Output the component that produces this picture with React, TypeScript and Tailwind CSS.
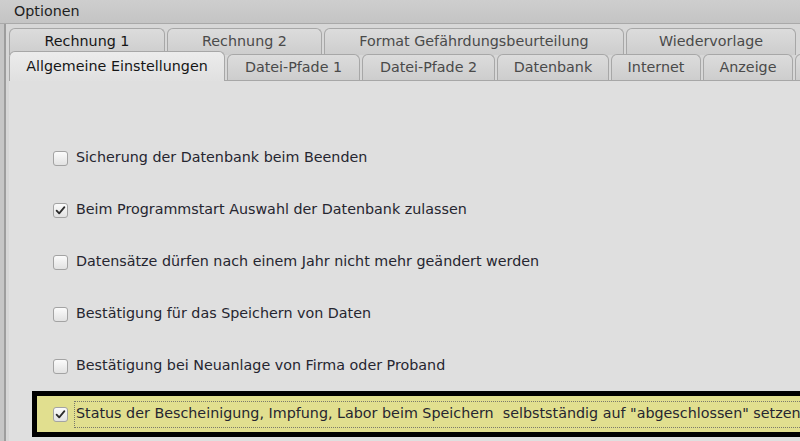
import { ReactNode } from 'react';

const backTabs = [
  { label: 'Rechnung 1', w: 'w-[156px]', dark: true },
  { label: 'Rechnung 2', w: 'w-[155px]' },
  { label: 'Format Gefährdungsbeurteilung', w: 'w-[300px]' },
  { label: 'Wiedervorlage', w: 'w-[170px]' },
];

const frontTabs = [
  { label: 'Datei-Pfade 1', w: 'w-[133px]' },
  { label: 'Datei-Pfade 2', w: 'w-[133px]' },
  { label: 'Datenbank', w: 'w-[112px]' },
  { label: 'Internet', w: 'w-[90px]' },
  { label: 'Anzeige', w: 'w-[90px]' },
  { label: '', w: 'w-[90px]' },
];

const options = [
  { label: 'Sicherung der Datenbank beim Beenden', checked: false },
  { label: 'Beim Programmstart Auswahl der Datenbank zulassen', checked: true },
  { label: 'Datensätze dürfen nach einem Jahr nicht mehr geändert werden', checked: false },
  { label: 'Bestätigung für das Speichern von Daten', checked: false },
  { label: 'Bestätigung bei Neuanlage von Firma oder Proband', checked: false },
];

function Tab({ children, className, dark }: { children: ReactNode; className: string; dark?: boolean }) {
  return (
    <div
      className={`shrink-0 h-full flex items-center justify-center rounded-t-[6px] border border-b-0 border-[#a7a7a7] bg-gradient-to-b from-[#dcdcdc] to-[#cdcdcd] ${
        dark ? 'text-[#161616]' : 'text-[#4a4a4a]'
      } ${className}`}
    >
      {children}
    </div>
  );
}

function CheckBox({ checked }: { checked: boolean }) {
  return (
    <div className="shrink-0 w-[15px] h-[15px] rounded-[3px] border border-[#a3a3a3] bg-gradient-to-b from-[#fbfbfb] to-[#e2e2e2] flex items-center justify-center">
      {checked && (
        <svg width="11" height="11" viewBox="0 0 11 11">
          <path d="M1.6 5.6 L4.2 8.4 L9.4 2.2" fill="none" stroke="#2b2b2b" strokeWidth="1.8" strokeLinecap="round" strokeLinejoin="round" />
        </svg>
      )}
    </div>
  );
}

export default function App() {
  return (
    <div className="w-[800px] h-[441px] overflow-hidden flex flex-col bg-[#c6c6c6] text-[14.3px] text-[#262630] font-['DejaVu_Sans',sans-serif]">
      {/* Window title */}
      <div className="h-[24px] shrink-0 flex items-center px-[14px] bg-gradient-to-b from-[#cecece] to-[#c4c4c4] border-b border-[#a9a9a9] text-[#1e1e1e]">
        Optionen
      </div>

      <div className="flex-1 flex min-h-0 pl-[4px]">
        <div className="flex-1 flex flex-col min-w-0 border-l-2 border-[#9d9d9d] bg-[#d7d7d7] pl-[3px] pt-[4px]">
          {/* Tab rows */}
          <div className="flex gap-[2px] h-[27px] shrink-0">
            {backTabs.map((t) => (
              <Tab key={t.label} className={t.w} dark={t.dark}>
                {t.label}
              </Tab>
            ))}
          </div>
          <div className="flex gap-[2px] h-[26px] shrink-0 items-end -mt-px relative z-10">
            <div className="shrink-0 w-[216px] h-[30px] -mb-px flex items-center justify-center rounded-t-[6px] border border-b-0 border-[#a7a7a7] bg-gradient-to-b from-[#ececec] to-[#e0e0e0] text-[#161616]">
              Allgemeine Einstellungen
            </div>
            {frontTabs.map((t, i) => (
              <Tab key={i} className={t.w}>
                {t.label}
              </Tab>
            ))}
          </div>

          {/* Page: Allgemeine Einstellungen */}
          <div className="flex-1 min-h-0 flex flex-col border-t border-[#a7a7a7] bg-[#dfdfdf] pt-[67px]">
            <div className="flex flex-col gap-[32px] pl-[44px]">
              {options.map((o) => (
                <div key={o.label} className="h-[20px] flex items-center gap-[8px] whitespace-nowrap">
                  <CheckBox checked={o.checked} />
                  <span>{o.label}</span>
                </div>
              ))}
            </div>

            <div className="mt-[15px] ml-[23px] h-[46px] shrink-0 border-[5px] border-r-0 border-black bg-[#e1df8f] flex items-center pl-[16px] whitespace-nowrap overflow-hidden">
              <CheckBox checked />
              <span className="ml-[6px] h-[27px] flex items-center px-px border border-dotted border-[#7a7a6a] border-r-0 whitespace-pre">
                Status der Bescheinigung, Impfung, Labor beim Speichern  selbstständig auf "abgeschlossen" setzen
              </span>
            </div>
          </div>
        </div>
      </div>
    </div>
  );
}
